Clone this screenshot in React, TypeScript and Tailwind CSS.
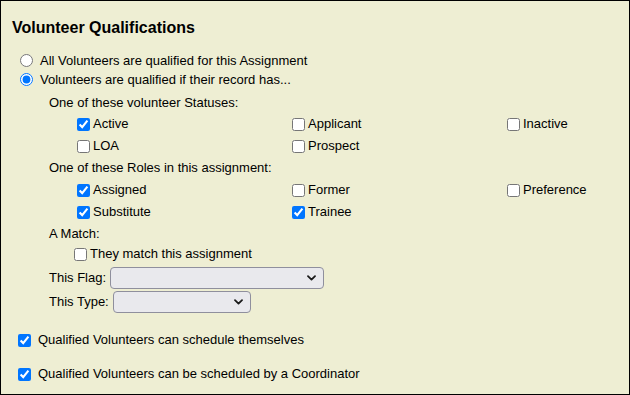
import React from "react";

function Cb({ checked, label }: { checked?: boolean; label: string }) {
  return (
    <label className="flex items-center h-[22px] gap-[3px] whitespace-nowrap">
      <input type="checkbox" defaultChecked={checked} className="w-[13px] h-[13px] m-0" />
      <span>{label}</span>
    </label>
  );
}

function Chevron() {
  return (
    <svg width="9" height="6" viewBox="0 0 9 6" className="absolute right-[8px] top-1/2 -translate-y-1/2 pointer-events-none">
      <path d="M1 1.2 L4.5 4.6 L8 1.2" fill="none" stroke="#1a1a1a" strokeWidth="1.8" strokeLinecap="round" strokeLinejoin="round" />
    </svg>
  );
}

function Sel({ width }: { width: string }) {
  return (
    <span className={`relative inline-block ${width} h-[22px]`}>
      <select className="appearance-none w-full h-full bg-[#e9e9ed] border border-[#8f8f9d] rounded-[4px]">
        <option></option>
      </select>
      <Chevron />
    </span>
  );
}

export default function App() {
  return (
    <div
      className="w-[630px] h-[395px] border border-black bg-[#eeeed3] text-black text-[13px] pl-[11px] pt-[18px] flex flex-col overflow-hidden"
      style={{ fontFamily: '"Liberation Sans", Arial, sans-serif' }}
    >
      <div className="text-[16px] leading-[18px] font-bold h-[18px]">Volunteer Qualifications</div>

      <label className="flex items-center h-[19px] mt-[14px] ml-[8px] gap-[7px]">
        <input type="radio" name="q" className="w-[13px] h-[13px] m-0" />
        <span>All Volunteers are qualified for this Assignment</span>
      </label>
      <label className="flex items-center h-[19px] ml-[8px] gap-[7px]">
        <input type="radio" name="q" defaultChecked className="w-[13px] h-[13px] m-0" />
        <span>Volunteers are qualified if their record has...</span>
      </label>

      <div className="h-[18px] leading-[18px] mt-[5px] ml-[37px]">One of these volunteer Statuses:</div>
      <div className="grid grid-cols-[215px_215px_1fr] ml-[65px] mt-[1px]">
        <Cb checked label="Active" />
        <Cb label="Applicant" />
        <Cb label="Inactive" />
        <Cb label="LOA" />
        <Cb label="Prospect" />
        <div />
      </div>

      <div className="h-[18px] leading-[18px] mt-[2px] ml-[37px]">One of these Roles in this assignment:</div>
      <div className="grid grid-cols-[215px_215px_1fr] ml-[65px] mt-[2px]">
        <Cb checked label="Assigned" />
        <Cb label="Former" />
        <Cb label="Preference" />
        <Cb checked label="Substitute" />
        <Cb checked label="Trainee" />
        <div />
      </div>

      <div className="h-[18px] leading-[18px] mt-[2px] ml-[37px]">A Match:</div>
      <label className="flex items-center h-[20px] gap-[3px] ml-[62px] mt-[1px]">
        <input type="checkbox" className="w-[13px] h-[13px] m-0" />
        <span>They match this assignment</span>
      </label>

      <div className="flex items-center h-[22px] mt-[3px] ml-[37px] gap-[4px]">
        <span>This Flag:</span>
        <Sel width="w-[214px]" />
      </div>
      <div className="flex items-center h-[22px] mt-[2px] ml-[37px] gap-[4px]">
        <span>This Type:</span>
        <Sel width="w-[138px]" />
      </div>

      <label className="flex items-center h-[20px] mt-[17px] ml-[6px] gap-[7px]">
        <input type="checkbox" defaultChecked className="w-[13px] h-[13px] m-0" />
        <span>Qualified Volunteers can schedule themselves</span>
      </label>
      <label className="flex items-center h-[20px] mt-[14px] ml-[6px] gap-[7px]">
        <input type="checkbox" defaultChecked className="w-[13px] h-[13px] m-0" />
        <span>Qualified Volunteers can be scheduled by a Coordinator</span>
      </label>
    </div>
  );
}
